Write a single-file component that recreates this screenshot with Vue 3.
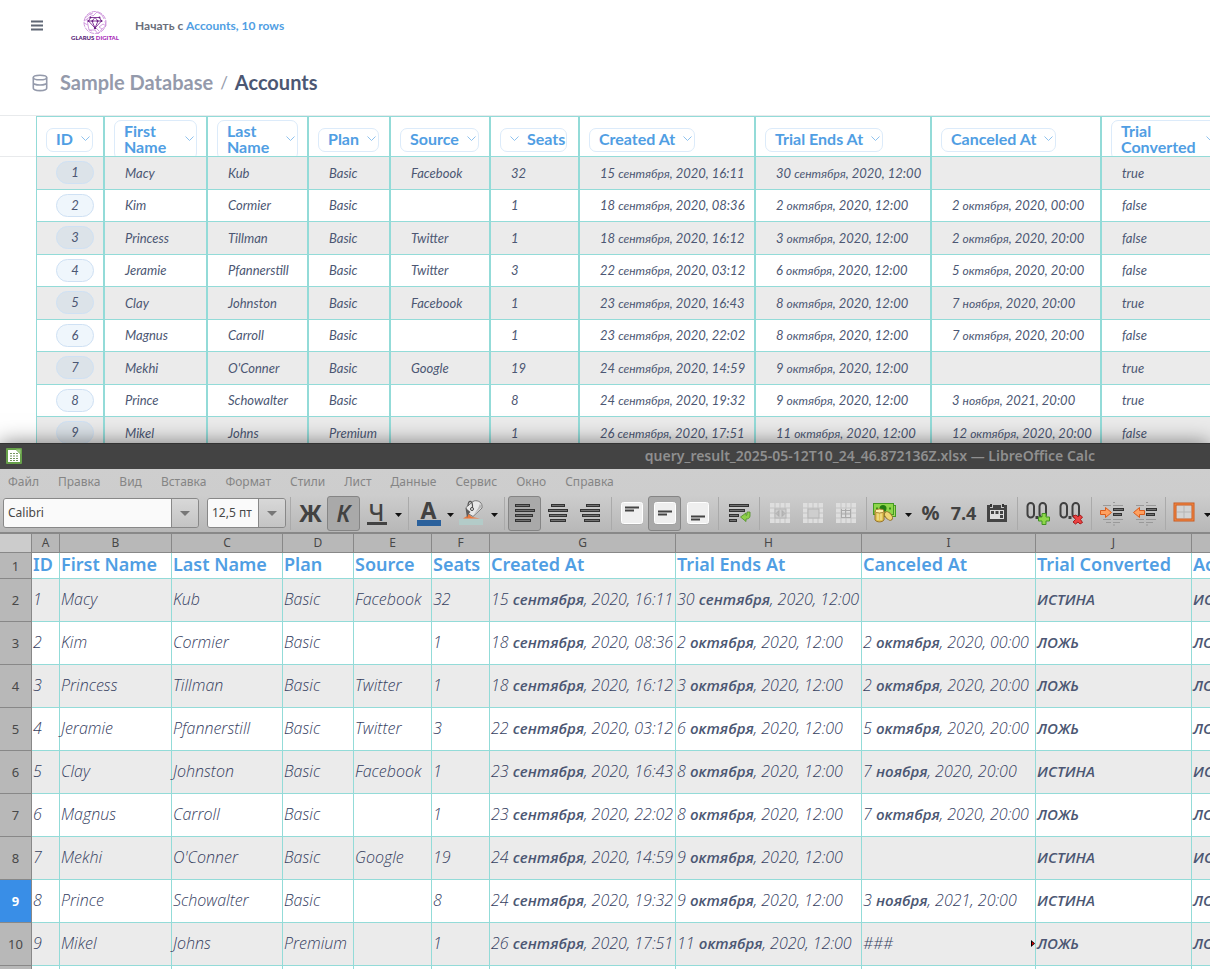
<script setup>
const columns = [
  { name: 'ID', cls: 'w-id' },
  { name: 'First Name', cls: 'w-first' },
  { name: 'Last Name', cls: 'w-last' },
  { name: 'Plan', cls: 'w-plan' },
  { name: 'Source', cls: 'w-source' },
  { name: 'Seats', cls: 'w-seats', flip: true },
  { name: 'Created At', cls: 'w-date' },
  { name: 'Trial Ends At', cls: 'w-date' },
  { name: 'Canceled At', cls: 'w-cancel' },
  { name: 'Trial Converted', cls: 'w-conv' },
]

const rows = [
  ['1', 'Macy', 'Kub', 'Basic', 'Facebook', '32', '15 сентября, 2020, 16:11', '30 сентября, 2020, 12:00', '', 'true'],
  ['2', 'Kim', 'Cormier', 'Basic', '', '1', '18 сентября, 2020, 08:36', '2 октября, 2020, 12:00', '2 октября, 2020, 00:00', 'false'],
  ['3', 'Princess', 'Tillman', 'Basic', 'Twitter', '1', '18 сентября, 2020, 16:12', '3 октября, 2020, 12:00', '2 октября, 2020, 20:00', 'false'],
  ['4', 'Jeramie', 'Pfannerstill', 'Basic', 'Twitter', '3', '22 сентября, 2020, 03:12', '6 октября, 2020, 12:00', '5 октября, 2020, 20:00', 'false'],
  ['5', 'Clay', 'Johnston', 'Basic', 'Facebook', '1', '23 сентября, 2020, 16:43', '8 октября, 2020, 12:00', '7 ноября, 2020, 20:00', 'true'],
  ['6', 'Magnus', 'Carroll', 'Basic', '', '1', '23 сентября, 2020, 22:02', '8 октября, 2020, 12:00', '7 октября, 2020, 20:00', 'false'],
  ['7', 'Mekhi', "O'Conner", 'Basic', 'Google', '19', '24 сентября, 2020, 14:59', '9 октября, 2020, 12:00', '', 'true'],
  ['8', 'Prince', 'Schowalter', 'Basic', '', '8', '24 сентября, 2020, 19:32', '9 октября, 2020, 12:00', '3 ноября, 2021, 20:00', 'true'],
  ['9', 'Mikel', 'Johns', 'Premium', '', '1', '26 сентября, 2020, 17:51', '11 октября, 2020, 12:00', '12 октября, 2020, 20:00', 'false'],
]

const letters = ['A', 'B', 'C', 'D', 'E', 'F', 'G', 'H', 'I', 'J', '']
const sheetHeads = [...columns.map((c) => c.name), 'Active']
const activeRow = 9

const sheetRows = rows.map((r, i) => {
  const cells = r.slice(0, 9)
  if (i === 8) cells[8] = '###'
  const conv = r[9] === 'true' ? 'ИСТИНА' : 'ЛОЖЬ'
  const active = ['ИСТИНА', 'ЛОЖЬ', 'ЛОЖЬ', 'ЛОЖЬ', 'ИСТИНА', 'ЛОЖЬ', 'ИСТИНА', 'ЛОЖЬ', 'ЛОЖЬ'][i]
  return { n: i + 2, cells: [...cells, conv, active] }
})

// Cyrillic runs are set a size smaller than Latin letters and digits.
const runs = (t) => t.split(/([А-Яа-яЁё]+)/).filter(Boolean).map((s) => ({ s, cyr: /[А-Яа-яЁё]/.test(s) }))

const menus = ['Файл', 'Правка', 'Вид', 'Вставка', 'Формат', 'Стили', 'Лист', 'Данные', 'Сервис', 'Окно', 'Справка']

const tools = [
  { k: 'sep' },
  { k: 'bold', t: 'Полужирный' }, { k: 'italic', t: 'Курсив', on: true }, { k: 'under', t: 'Подчёркнутый' }, { k: 'arrow' },
  { k: 'sep' },
  { k: 'color', t: 'Цвет шрифта' }, { k: 'arrow' }, { k: 'fill', t: 'Цвет фона' }, { k: 'arrow' },
  { k: 'sep' },
  { k: 'left', t: 'По левому краю', on: true }, { k: 'center', t: 'По центру' }, { k: 'right', t: 'По правому краю' },
  { k: 'sep' },
  { k: 'vtop', t: 'По верхнему краю' }, { k: 'vmid', t: 'По середине', on: true }, { k: 'vbot', t: 'По нижнему краю' },
  { k: 'sep' },
  { k: 'wrap', t: 'Переносить текст' },
  { k: 'sep' },
  { k: 'merge1', t: 'Объединить и центрировать' }, { k: 'merge2', t: 'Объединить ячейки' }, { k: 'merge3', t: 'Разъединить ячейки' },
  { k: 'sep' },
  { k: 'money', t: 'Денежный формат' }, { k: 'arrow' }, { k: 'percent', t: 'Процентный формат' }, { k: 'number', t: 'Числовой формат' }, { k: 'date', t: 'Формат даты' },
  { k: 'sep' },
  { k: 'decadd', t: 'Добавить разряд' }, { k: 'decdel', t: 'Удалить разряд' },
  { k: 'sep' },
  { k: 'indent', t: 'Увеличить отступ' }, { k: 'outdent', t: 'Уменьшить отступ' },
  { k: 'sep' },
  { k: 'border', t: 'Обрамление' }, { k: 'arrow' },
]

const lines = {
  left: [[1, 15], [1, 20], [1, 18], [1, 16]],
  center: [[4, 14], [1, 20], [2, 18], [3, 16]],
  right: [[6, 14], [0, 20], [2, 18], [4, 16]],
}
const vlines = { vtop: [7, 10], vmid: [11, 14], vbot: [16, 19] }
</script>

<template>
  <div class="desktop">
    <main class="web">
      <header class="topbar">
        <button class="burger" aria-label="Меню">
          <svg width="12" height="11" viewBox="0 0 12 11"><path d="M0 1.500h12M0 5.500h12M0 9.500h12" stroke="#5f6775" stroke-width="2" /></svg>
        </button>
        <a class="logo" href="#" aria-label="Glarus Digital">
          <svg width="26" height="25" viewBox="0 0 26 25" fill="none" stroke="#cf97dd" stroke-width="1">
            <circle cx="13" cy="12.500" r="11" stroke-dasharray="5 1" />
            <path d="M3 8l5-4 3 2 4-4 5 3 2 4M2 13l4 2 1 5 6 0 3 4 4-5 4-3-1-5M6 15l-1-6 4-3M17 21l-3-3M20 19l-3-2 4-3 3 2M7 20l3 1M11 3l-3 1M5 9l-3 2" stroke-width="0.900" />
            <g stroke="#7b2b91"><path d="M8.500 7.500h9l2 3.500-6.500 7-6.500-7zM6.500 11h13M10 11l3 7 3-7-3-3.500z" stroke-width="0.900" /></g>
            <g fill="#6a1f83" stroke="none"><circle cx="8.500" cy="7.500" r="1" /><circle cx="17.500" cy="7.500" r="1" /><circle cx="6.500" cy="11" r="1" /><circle cx="19.500" cy="11" r="1" /><circle cx="10.500" cy="11" r="1" /><circle cx="15.500" cy="11" r="1" /><circle cx="13" cy="18" r="1.200" /></g>
          </svg>
          <span class="brand">GLARUS <b>DIGITAL</b></span>
        </a>
        <p class="start">Начать с <a href="#">Accounts, 10 rows</a></p>
      </header>
      <nav class="crumbs">
        <svg width="16" height="18" viewBox="0 0 16 18" fill="none" stroke="#949aab" stroke-width="1.600">
          <ellipse cx="8" cy="3.500" rx="6.700" ry="2.300" />
          <path d="M1.300 3.500v10.800c0 1.200 3 2.300 6.700 2.300s6.700-1.100 6.700-2.300V3.500M1.300 8.700C1.300 9.900 4.300 11 8 11s6.700-1.100 6.700-2.300" />
        </svg>
        <a href="#">Sample Database</a><span class="slash">/</span><h1>Accounts</h1>
      </nav>
      <div class="grid">
        <table class="accounts">
          <colgroup><col v-for="c in columns" :key="c.name" :class="c.cls" /></colgroup>
          <thead>
            <tr>
              <th v-for="c in columns" :key="c.name" scope="col">
                <div class="headbox">
                  <button class="pill" :class="{ flip: c.flip }">
                    <span>{{ c.name }}</span>
                    <svg width="9" height="6" viewBox="0 0 9 6"><path d="M.5.5l4 4 4-4" fill="none" stroke="#8fc2ee" /></svg>
                  </button>
                </div>
              </th>
            </tr>
          </thead>
          <tbody>
            <tr v-for="r in rows" :key="r[0]">
              <td v-for="(v, i) in r" :key="i"><a v-if="i === 0" class="badge" href="#">{{ v }}</a><template v-else><span v-for="(p, j) in runs(v)" :key="j" :class="{ month: p.cyr }">{{ p.s }}</span></template></td>
            </tr>
          </tbody>
        </table>
      </div>
    </main>

    <section class="calc">
      <header class="title">
        <svg width="16" height="16" viewBox="0 0 16 16">
          <rect width="16" height="16" rx="1" fill="#67a04a" /><path d="M2 2h8l4 4v8H2z" fill="#fff" /><path d="M10 1.500h4.500V6z" fill="#a4cf86" />
          <path d="M4 5.500h8M4 8h8M4 10.500h8M4 12.500h8" stroke="#75955f" stroke-dasharray="2 1" />
        </svg>
        <h2>query_result_2025-05-12T10_24_46.872136Z.xlsx — LibreOffice Calc</h2>
      </header>
      <div class="chrome">
        <nav class="menus"><button v-for="m in menus" :key="m">{{ m }}</button></nav>
        <div class="tools">
          <div class="combo family">
            <input type="text" value="Calibri" aria-label="Гарнитура" />
            <button aria-label="Список гарнитур"><svg width="10" height="5" viewBox="0 0 10 5"><path d="M0 0h10L5 5z" fill="#777" /></svg></button>
          </div>
          <div class="combo size">
            <input type="text" value="12,5 пт" aria-label="Кегль" />
            <button aria-label="Список кеглей"><svg width="10" height="5" viewBox="0 0 10 5"><path d="M0 0h10L5 5z" fill="#777" /></svg></button>
          </div>
          <template v-for="(t, i) in tools" :key="i">
            <span v-if="t.k === 'sep'" class="sep"></span>
            <button v-else-if="t.k === 'arrow'" class="arrow" aria-label="Ещё"><svg width="7" height="4" viewBox="0 0 7 4"><path d="M0 0h7L3.500 4z" fill="#111" /></svg></button>
            <button v-else class="tool" :class="{ on: t.on }" :aria-label="t.t">
              <span v-if="t.k === 'bold'" class="g bold">Ж</span>
              <span v-else-if="t.k === 'italic'" class="g ital">К</span>
              <span v-else-if="t.k === 'under'" class="g under">Ч</span>
              <span v-else-if="t.k === 'color'" class="g color">А</span>
              <span v-else-if="t.k === 'percent'" class="g pct">%</span>
              <span v-else-if="t.k === 'number'" class="g num">7.4</span>
              <svg v-else width="24" height="24" viewBox="0 0 24 24">
                <g v-if="t.k === 'fill'">
                  <rect x="-2" y="18" width="24" height="6" fill="#b3cbc8" />
                  <path d="M2 17.500l4-2.500 1-3 4 4 8 1.500z" fill="#ed7a3c" />
                  <path d="M5 6.500L12 .5c3-2 9 0 9 4.500v2l-9 8.500-5-3z" fill="#e8e8e8" stroke="#777" />
                  <path d="M13 13l7.500-7L19 2.500l-2 5z" fill="#b5b5b5" />
                  <path d="M4.500 7l5 4-2 2L6 17z" fill="#5c5c5c" />
                  <path d="M7 5c0-7 5-6 4.500 2" fill="none" stroke="#555" stroke-width="1.200" /><circle cx="11" cy="8" r="1.500" fill="#eee" stroke="#444" />
                </g>
                <g v-else-if="lines[t.k]" fill="#707070" stroke="#333">
                  <rect v-for="(l, j) in lines[t.k]" :key="j" :x="l[0] + 1.5" :y="3.500 + j * 5" :width="l[1] - 1" height="2" />
                </g>
                <g v-else-if="vlines[t.k]">
                  <rect x="1.500" y="1.500" width="21" height="22" rx="2" fill="#999" opacity=".6" />
                  <rect x="1.500" y="1.500" width="21" height="21" rx="2" fill="#efefef" stroke="#fff" />
                  <path :d="`M5 ${vlines[t.k][0] - .5}h14M5 ${vlines[t.k][1] - .5}h9`" stroke="#444" stroke-width="2" />
                </g>
                <g v-else-if="t.k === 'wrap'">
                  <g fill="#707070" stroke="#333"><rect x="2.500" y="3.500" width="19" height="2" /><rect x="2.500" y="8.500" width="15" height="2" /><rect x="2.500" y="13.500" width="9" height="2" /><rect x="2.500" y="18.500" width="7" height="2" /></g>
                  <path d="M20 11h3v4c0 2-2 3-4 3v2.500L13.500 16l5.500-4v2.500c1 0 1-1 1-3.500z" fill="#8fd04a" stroke="#4e8f25" stroke-width=".8" />
                </g>
                <g v-else-if="t.k.startsWith('merge')">
                  <rect x="2" y="2" width="20" height="20" fill="#dedede" />
                  <path d="M7 2v20M12 2v20M17 2v20M2 7h20M2 12h20M2 17h20" stroke="#c4c4c4" />
                  <rect v-if="t.k !== 'merge3'" x="7" y="8" width="11" height="9" fill="#cecece" stroke="#b5b5b5" />
                  <path v-if="t.k === 'merge1'" d="M11 9.500L8 12.500l3 3zM14 9.500l3 3-3 3z" fill="#bbb" stroke="#a8a8a8" stroke-width=".7" />
                  <path v-if="t.k === 'merge3'" d="M7.500 8v9M11.500 8v9M16.500 8v9M7 9.500h10M7 16.500h10M7 13h10" stroke="#aaa" />
                </g>
                <g v-else-if="t.k === 'money'">
                  <rect x="1.500" y="4.500" width="19" height="11" fill="#a5d95f" stroke="#449a23" />
                  <rect x="-1.500" y="2.500" width="20" height="11" fill="#8ed64a" stroke="#449a23" /><ellipse cx="8" cy="7.500" rx="3.500" ry="3.500" fill="#237c11" /><path d="M1 7.500h2M14 7.500h2" stroke="#379019" stroke-width="2" />
                  <path d="M0 10v9c2 2.500 7 2.500 9 0v-9z" fill="#e3c352" stroke="#94712c" /><path d="M3 11v8M6 11v8" stroke="#f8ecaa" /><ellipse cx="4.500" cy="10" rx="4.500" ry="2" fill="#fff0a8" stroke="#a98234" />
                  <ellipse cx="13.500" cy="15" rx="5" ry="3" transform="rotate(48 13.500 15)" fill="#efd574" stroke="#94712c" />
                </g>
                <g v-else-if="t.k === 'date'">
                  <path d="M2 4h3v3h3V4h8v3h3V4h3v17H2z" fill="#444" /><rect x="5" y="9" width="14" height="9" fill="#ddd" />
                  <g fill="#444"><rect x="6" y="10" width="3" height="3" /><rect x="10.500" y="10" width="3" height="3" /><rect x="15" y="10" width="3" height="3" /><rect x="15" y="14" width="3" height="3" /></g>
                  <path d="M6 3v3M18 3v3" stroke="#333" stroke-width="2" />
                </g>
                <g v-else-if="t.k === 'decadd' || t.k === 'decdel'">
                  <rect x="1.500" y="2" width="6.500" height="14.500" rx="3.250" fill="none" stroke="#404040" stroke-width="2" />
                  <rect x="13.500" y="2" width="6.500" height="14.500" rx="3.250" fill="none" stroke="#404040" stroke-width="2" />
                  <rect x="9.500" y="15" width="3" height="3" fill="#404040" />
                  <path v-if="t.k === 'decadd'" d="M16 12.500h4v3.500h3.500v4H20v3.500h-4V20h-3.500v-4H16z" fill="#8ed64a" stroke="#429323" />
                  <path v-else d="M14 15l3-1 2 2 2-2 2.500 2-2 2.500 2 3-2.500 1.500-2-2-2.500 2-2.500-2 2.500-2.500z" fill="#ea4242" stroke="#a81d1d" />
                </g>
                <g v-else-if="t.k === 'indent' || t.k === 'outdent'">
                  <path d="M3 4.500h8M13 4.500h10M3 18.500h8M13 18.500h10M13 1.500h2M13 24h2M6 21.500h5M13 21.500h7" stroke="#999" />
                  <g fill="#707070" stroke="#333"><rect x="13.500" y="7.500" width="10" height="2" /><rect x="13.500" y="12.500" width="8" height="2" /></g>
                  <path v-if="t.k === 'indent'" d="M.5 9.500h5v-3L11.500 11.500 5.500 16.500v-3h-5z" fill="#ffa05f" stroke="#da5c1c" />
                  <path v-else d="M11.500 9.500h-5v-3L.5 11.500l6 5v-3h5z" fill="#ffa05f" stroke="#da5c1c" />
                </g>
                <g v-else-if="t.k === 'border'">
                  <rect x="1" y="3" width="18" height="16" fill="#d3d3d3" stroke="#c95b20" stroke-width="3" /><rect x="1" y="3" width="18" height="16" fill="none" stroke="#f88b46" />
                  <path d="M10 5v12M3 11h14" stroke="#b5b5b5" />
                </g>
              </svg>
            </button>
          </template>
        </div>
      </div>
      <div class="sheetbox">
        <table class="sheet">
          <colgroup>
            <col class="s-n" /><col class="s-a" /><col class="s-b" /><col class="s-c" /><col class="s-d" /><col class="s-e" /><col class="s-f" /><col class="s-g" /><col class="s-g" /><col class="s-i" /><col class="s-j" /><col class="s-k" />
          </colgroup>
          <thead>
            <tr><th class="corner"></th><th v-for="(l, i) in letters" :key="i" scope="col">{{ l }}</th></tr>
          </thead>
          <tbody>
            <tr class="names"><th scope="row">1</th><td v-for="h in sheetHeads" :key="h">{{ h }}</td></tr>
            <tr v-for="r in sheetRows" :key="r.n">
              <th scope="row" :class="{ active: r.n === activeRow }">{{ r.n }}</th>
              <td v-for="(c, i) in r.cells" :key="i"><span v-for="(p, j) in runs(c)" :key="j" :class="{ cyr: p.cyr }">{{ p.s }}</span><svg v-if="c === '###'" class="overflow-mark" width="4" height="7" viewBox="0 0 4 7"><path d="M0 0l4 3.500L0 7z" fill="#000" /><path d="M1 2l2 1.500L1 5z" fill="#f00" /></svg></td>
            </tr>
            <tr><th scope="row">11</th><td v-for="h in sheetHeads" :key="h"></td></tr>
          </tbody>
        </table>
      </div>
    </section>
  </div>
</template>

<style>
body { margin: 0; }
</style>

<style scoped>
* { box-sizing: border-box; }
button { border: 0; padding: 0; margin: 0; background: none; font: inherit; color: inherit; }
a { color: inherit; text-decoration: none; }
svg { display: block; flex: none; overflow: visible; }
table { border-collapse: separate; border-spacing: 0; table-layout: fixed; width: 100%; }
th, td { padding: 0; text-align: left; white-space: nowrap; }

.desktop { height: 100vh; display: grid; grid-template-rows: minmax(0, 443fr) minmax(0, 526fr); grid-template-columns: minmax(0, 1fr); overflow: hidden; }

.web { overflow: hidden; background: #fff; color: #4c5773; font-family: Lato, "Noto Sans", sans-serif; }
.topbar { display: flex; align-items: center; height: 51px; padding-left: 31px; }
.logo { display: flex; flex-direction: column; align-items: center; width: 48px; margin: 0 16px 0 28px; }
.brand { font-size: 6px; line-height: 6px; font-weight: 900; color: #572477; white-space: nowrap; }
.brand b { color: #a92bb9; font-weight: 900; }
.start { margin: 0; font-size: 12px; font-weight: 700; color: #696e7b; }
.start a, .pill { color: #509ee3; }
.crumbs { display: flex; align-items: center; height: 64px; padding: 0 0 2px 32px; font-size: 20px; font-weight: 700; color: #949aab; }
.crumbs svg { margin-top: 2px; }
.crumbs a { margin-left: 12px; }
.slash { margin: 0 7px; font-size: 17px; font-weight: 400; }
.crumbs h1 { margin: 0; font-size: 20px; color: #4c5773; }
.grid { border-top: 1px solid #e8eaec; padding-left: 36px; background: linear-gradient(#e8eaec, #e8eaec) 0 40px / 100% 1px no-repeat; overflow: hidden; }
.w-id { width: 68px; } .w-first { width: 103px; } .w-last { width: 101px; } .w-plan { width: 82px; } .w-source { width: 100px; } .w-seats { width: 89px; } .w-date { width: 176px; } .w-cancel { width: 170px; } .w-conv { width: 127px; }
.accounts th, .accounts td { border: solid #93dbd8; border-width: 0 1px 1px; }
.accounts th { height: 41px; border-top-width: 1px; background: #fff; }
.headbox { display: flex; align-items: center; height: 39px; padding: 6px 9px 0; overflow: hidden; }
.pill { display: flex; align-items: center; gap: 8px; min-height: 24px; padding: 2px 2px 4px 9px; border: 1px solid #dcebfa; border-radius: 7px; font-size: 16px; line-height: 16px; font-weight: 700; white-space: normal; text-align: left; }
.pill span { flex: 1; }
.flip { flex-direction: row-reverse; padding: 2px 1px 4px 9px; }
.accounts td { height: 32px; padding: 0 0 1px 20px; font-size: 13px; font-style: italic; }
.accounts tbody tr:nth-child(odd) td { height: 33px; background: #ebebeb; }
.accounts td:first-child { padding-left: 19px; }
.month { font-size: 12px; }
.badge { display: block; width: 38px; height: 23px; line-height: 21px; border: 1px solid #cfe1f4; border-radius: 12px; background: rgba(80, 158, 227, 0.09); text-align: center; }

.calc { position: relative; display: flex; flex-direction: column; background: #ccc; font-family: "Noto Sans", sans-serif; box-shadow: 0 0 20px rgba(0, 0, 0, 0.5); min-width: 0; }
.title { display: flex; align-items: center; height: 26px; flex: none; padding: 0 6px 2px; background: #434343; border-top: 1px solid #333; color: #8f8f8f; }
.title h2 { margin: 0 109px 0 auto; font-size: 14px; line-height: 24px; font-weight: 600; white-space: nowrap; }
.chrome { flex: none; background: linear-gradient(#cecece 0, #cdcdcd 26px, #b7b7b7 100%); border-bottom: 2px solid #888; height: 65px; }
.menus { display: flex; gap: 19px; padding: 0 8px 2px; height: 26px; font-size: 12px; color: #858585; }
.tools { display: flex; align-items: center; height: 37px; padding: 0 0 1px 3px; }
.combo { display: flex; flex: none; height: 30px; border: 1px solid #888; border-radius: 3px; overflow: hidden; }
.family { width: 196px; margin-right: 8px; } .size { width: 79px; }
.combo input { flex: 1; min-width: 0; border: 0; padding: 0 0 1px 4px; background: #fafafa; color: #484848; font: 12px "Noto Sans", sans-serif; }
.combo button { width: 27px; display: grid; place-items: center; border-left: 1px solid #888; background: linear-gradient(#d8d8d8, #c4c4c4); }
.sep { flex: none; width: 1px; height: 33px; margin: 0 3px 0 4px; background: #aaa; }
.tool { flex: none; width: 33px; height: 35px; display: grid; place-items: center; border: 1px solid transparent; border-radius: 3px; }
.tool.on { background: #a9a9a9; border-color: #858585; }
.arrow { flex: none; width: 11px; height: 34px; display: grid; place-items: center; padding-top: 4px; }
.g { color: #424242; line-height: 24px; font-size: 23px; font-weight: 700; }
.ital { font-style: italic; font-weight: 600; }
.under { font-weight: 500; width: 20px; text-align: center; line-height: 20px; border-bottom: 3px solid #424242; }
.color { width: 24px; text-align: center; line-height: 19px; border-bottom: 6px solid #2b619c; }
.pct { font-size: 20px; } .num { font-size: 18px; font-family: "Open Sans", sans-serif; }

.sheetbox { flex: 1; min-height: 0; overflow: hidden; background: #fff; }
.s-n { width: 32px; } .s-a { width: 28px; } .s-b { width: 112px; } .s-c { width: 111px; } .s-d { width: 71px; } .s-e { width: 78px; } .s-f { width: 58px; } .s-g { width: 186px; } .s-i { width: 174px; } .s-j { width: 156px; } .s-k { width: 112px; }
.sheet th { background: #b8b8b8; border: solid #888; border-width: 0 1px 1px 0; color: #484848; text-align: center; font-size: 13px; font-weight: 400; line-height: 18px; }
.sheet thead th { height: 19px; font-size: 12px; }
.sheet .corner { background: #ccc; }
.sheet th.active { background: #398ee7; color: #fff; font-weight: 700; }
.sheet td { position: relative; height: 43px; padding: 0 0 2px 1px; border: solid #93dbd8; border-width: 0 1px 1px 0; color: #35405f; font-family: "Open Sans", "Noto Sans", sans-serif; font-size: 16px; font-style: italic; font-weight: 300; }
.sheet tbody tr:nth-child(even) td { background: #ebebeb; }
.sheet .names td { height: 26px; padding-bottom: 3px; font-family: "Noto Sans", sans-serif; font-size: 18px; line-height: 22px; font-style: normal; font-weight: 600; color: #509ee3; }
.cyr { font-size: 15px; font-weight: 600; color: #4c5773; }
.overflow-mark { position: absolute; right: 0; top: 17px; }
</style>
